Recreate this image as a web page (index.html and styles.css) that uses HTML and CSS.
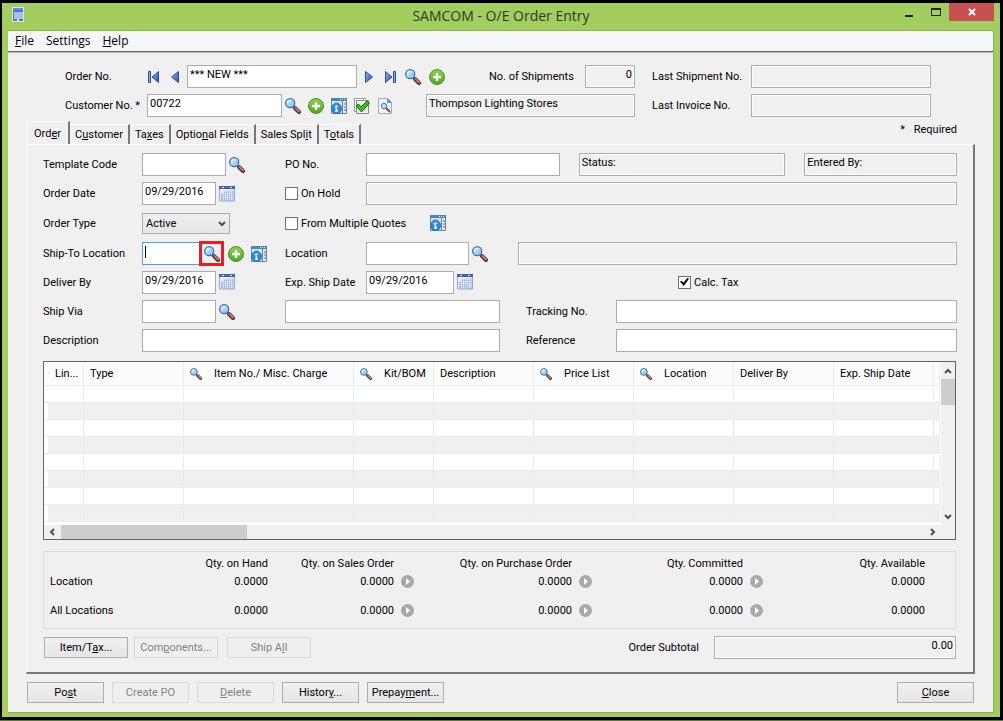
FILE: index.html
```html
<!DOCTYPE html>
<html lang="en">
<head>
<meta charset="utf-8">
<title>SAMCOM - O/E Order Entry</title>
<link rel="stylesheet" href="styles.css">
</head>
<body>

<!-- icon set -->
<svg class="sprite" aria-hidden="true">
  <linearGradient id="blue" x1="0" x2="1" y2="1"><stop offset="0" stop-color="#8fb4f0"/><stop offset="1" stop-color="#2450b0"/></linearGradient>
  <linearGradient id="lens" x1="0" x2="1" y2="1"><stop offset="0" stop-color="#d9f1ff"/><stop offset="1" stop-color="#7fb8ec"/></linearGradient>
  <linearGradient id="green" x2="0" y2="1"><stop offset="0" stop-color="#8fd04a"/><stop offset="1" stop-color="#4fa828"/></linearGradient>
  <linearGradient id="page" x1="0" x2="1" y2="1"><stop offset="0" stop-color="#ffffff"/><stop offset="1" stop-color="#b9cbf0"/></linearGradient>
  <symbol id="find" viewBox="0 0 16 16">
    <path d="M10 10l4 4" stroke="#5a2a2a" stroke-width="4" stroke-linecap="round"/>
    <path d="M10.500 10l3.500 3.500" stroke="#b98080" stroke-width="2" stroke-linecap="round"/>
    <path d="M8 8l2 2" stroke="#555c70" stroke-width="2"/>
    <circle cx="5.200" cy="5.200" r="4.500" fill="url(#lens)" stroke="#3f6ea8" stroke-width="1.300"/>
    <path d="M2.700 5.700a2.500 2.500 0 0 1 3-3" stroke="#fff" fill="none"/>
  </symbol>
  <symbol id="add" viewBox="0 0 16 16">
    <circle cx="8" cy="8" r="7.500" fill="url(#green)" stroke="#4a9424"/>
    <path d="M8 4v8M4 8h8" stroke="#fff" stroke-width="2.400"/>
  </symbol>
  <symbol id="info" viewBox="0 0 16 16">
    <path d="M.5.5h15v15H.5z" fill="#dfe6ee" stroke="#6d8494"/>
    <path d="M0 0h16v3H0z" fill="#4788b8"/><path d="M9 1.500h1M11 1.500h1M13 1.500h1" stroke="#fff"/>
    <path d="M3 5h5M2 7h3" stroke="#8a98a6"/><path d="M11.500 3v13" stroke="#6d8494"/>
    <path d="M13 6h2M13 9h2M13 12h2" stroke="#60707e"/>
    <circle cx="5.500" cy="10.500" r="5.200" fill="#2888dc" stroke="#1a68b4" stroke-width=".6"/>
    <path d="M2 9a4 3 0 0 1 7 0z" fill="#7cc0f5"/>
    <path d="M5.500 7v1.500M5.500 9.500V13M4.300 9.800h1M4 13h3" stroke="#fff" stroke-width="1.400"/>
  </symbol>
  <symbol id="approve" viewBox="0 0 16 16">
    <path d="M.5.5h11v13H.5z" fill="#fff" stroke="#9a9a9a"/>
    <path d="M2.500 2.500h12v13h-12z" fill="#f4f4f4" stroke="#888"/>
    <path d="M2 8l2.500-2L7 9l6-6 2.500 2L7.500 14z" fill="#35c21f" stroke="#0b6b08"/>
  </symbol>
  <symbol id="preview" viewBox="0 0 16 16">
    <path d="M1.500.5h9l4 4v11h-13z" fill="#eff3f8" stroke="#a4abb4"/>
    <path d="M10.500.5v4h4z" fill="#4aa0e0" stroke="#5f9fce"/>
    <circle cx="7" cy="8" r="2.700" fill="#b9def8" stroke="#447fbd"/>
    <path d="M9 10l4 4" stroke="#71505a" stroke-width="2"/>
  </symbol>
  <symbol id="calendar" viewBox="0 0 16 16">
    <path d="M.5 1h15v14H.5z" fill="url(#page)" stroke="#92a6d8"/>
    <path d="M0 0h16v3H0z" fill="#3f62b4"/><path d="M3 1.500h2M11 1.500h2" stroke="#fff"/>
    <path d="M4 5.500h10v6h-2v2H2v-6h2z" fill="#96abdd"/>
    <path d="M2 7.500h12M2 9.500h12M2 11.500h12M4.500 5v9M6.500 5v9M8.500 5v9M10.500 5v9M12.500 5v9" stroke="#e8eefc" stroke-width=".7"/>
  </symbol>
  <symbol id="next" viewBox="0 0 8 12"><path d="M.5.5v11l7-5.500z" fill="url(#blue)" stroke="#2c4c9c"/></symbol>
  <symbol id="prev" viewBox="0 0 8 12"><path d="M7.500.5v11L.5 6z" fill="url(#blue)" stroke="#2c4c9c"/></symbol>
  <symbol id="last" viewBox="0 0 12 12"><path d="M.5.5v11L7 6z" fill="url(#blue)" stroke="#2c4c9c"/><path d="M8.500.5h2v11h-2z" fill="#8fb0ec" stroke="#2c4c9c"/></symbol>
  <symbol id="first" viewBox="0 0 12 12"><path d="M11.500.5v11L5 6z" fill="url(#blue)" stroke="#2c4c9c"/><path d="M1.500.5h2v11h-2z" fill="#8fb0ec" stroke="#2c4c9c"/></symbol>
  <symbol id="go" viewBox="0 0 13 13"><circle cx="6.500" cy="6.500" r="6.500" fill="#a8a8a8"/><path d="M5 3v7l4-3.500z" fill="#fff"/></symbol>
  <symbol id="chevron" viewBox="0 0 8 6"><path d="M1 1l3 3 3-3" fill="none" stroke="#505050" stroke-width="2"/></symbol>
</svg>

<div class="window">
  <header class="titlebar">
    <svg class="app-icon" width="12" height="15" viewBox="0 0 12 15">
      <path d="M0 0h12v15H0z" fill="#d9e4f6"/><path d="M1 1h10v2H1z" fill="#6f8fd0"/>
      <path d="M1 3h10v2H1z" fill="#3c78e8"/><path d="M2 5h9v7H2z" fill="#a8c0ec"/>
      <path d="M1 12h4v2H1zM7 12h4v2H7z" fill="#68788c"/><path d="M1 5h1v9H1z" fill="#68788c"/>
    </svg>
    <h1>SAMCOM - O/E Order Entry</h1>
    <div class="window-buttons">
      <button type="button" aria-label="Minimize"><svg width="8" height="9"><path d="M0 8h8" stroke="#222" stroke-width="2"/></svg></button>
      <button type="button" aria-label="Maximize"><svg width="10" height="8"><path d="M.5 1v6.500h9V1" fill="none" stroke="#222"/><path d="M0 1h10" stroke="#222" stroke-width="2"/></svg></button>
      <button type="button" class="close" aria-label="Close window"><svg width="8" height="8"><path d="M1 1l6 6M7 1L1 7" stroke="#fff" stroke-width="2"/></svg></button>
    </div>
  </header>

  <main class="client">
    <nav class="menu">
      <a href="#"><u>F</u>ile</a>
      <a href="#">Settings</a>
      <a href="#"><u>H</u>elp</a>
    </nav>

    <form>
      <section class="order-head">
        <label for="order-no">Order No.</label>
        <div class="controls">
          <button type="button" class="icon nav-end" aria-label="First"><svg><use href="#first"/></svg></button>
          <button type="button" class="icon nav" aria-label="Previous"><svg><use href="#prev"/></svg></button>
          <input type="text" id="order-no" class="order-no" value="*** NEW ***">
          <button type="button" class="icon nav" aria-label="Next"><svg><use href="#next"/></svg></button>
          <button type="button" class="icon nav-end" aria-label="Last"><svg><use href="#last"/></svg></button>
          <button type="button" class="icon" aria-label="Find order"><svg><use href="#find"/></svg></button>
          <button type="button" class="icon" aria-label="New order"><svg><use href="#add"/></svg></button>
        </div>
        <div class="shipments">
          <label for="shipments">No. of Shipments</label>
          <input type="text" id="shipments" class="number" value="0" readonly>
        </div>
        <label for="last-shipment" class="last">Last Shipment No.</label>
        <input type="text" id="last-shipment" readonly>

        <label for="customer-no">Customer No. *</label>
        <div class="controls with-icons">
          <input type="text" id="customer-no" class="customer-no" value="00722">
          <button type="button" class="icon" aria-label="Find customer"><svg><use href="#find"/></svg></button>
          <button type="button" class="icon" aria-label="New customer"><svg><use href="#add"/></svg></button>
          <button type="button" class="icon" aria-label="Customer details"><svg><use href="#info"/></svg></button>
          <button type="button" class="icon" aria-label="Credit check"><svg><use href="#approve"/></svg></button>
          <button type="button" class="icon" aria-label="Customer inquiry"><svg><use href="#preview"/></svg></button>
        </div>
        <input type="text" value="Thompson Lighting Stores" aria-label="Customer name" readonly>
        <label for="last-invoice" class="last">Last Invoice No.</label>
        <input type="text" id="last-invoice" readonly>
      </section>

      <div class="tabs">
        <button type="button" class="active">Ord<u>e</u>r</button>
        <button type="button">C<u>u</u>stomer</button>
        <button type="button">Ta<u>x</u>es</button>
        <button type="button">Optio<u>n</u>al Fields</button>
        <button type="button">Sales Spl<u>i</u>t</button>
        <button type="button">T<u>o</u>tals</button>
        <p class="required"><span>*</span> Required</p>
      </div>

      <section class="panel">
        <div class="fields">
          <div class="row">
            <label for="template">Template Code</label>
            <div class="with-icons"><input type="text" id="template" class="w-code"><button type="button" class="icon" aria-label="Find template"><svg><use href="#find"/></svg></button></div>
            <label for="po">PO No.</label>
            <div class="rest po-row">
              <input type="text" id="po">
              <input type="text" value="Status:" aria-label="Status" readonly>
              <input type="text" value="Entered By:" aria-label="Entered by" readonly>
            </div>
          </div>

          <div class="row">
            <label for="order-date">Order Date</label>
            <div class="with-icons"><input type="text" id="order-date" class="w-date" value="09/29/2016"><button type="button" class="icon" aria-label="Pick order date"><svg><use href="#calendar"/></svg></button></div>
            <label class="check"><input type="checkbox"> On Hold</label>
            <input type="text" aria-label="Hold reason" readonly>
          </div>

          <div class="row tall">
            <label for="order-type">Order Type</label>
            <div class="select">
              <select id="order-type"><option>Active</option><option>Future</option><option>Standing</option><option>Quote</option></select>
              <svg width="8" height="6"><use href="#chevron"/></svg>
            </div>
            <div class="quotes">
              <label class="check"><input type="checkbox"> From Multiple Quotes</label>
              <button type="button" class="icon" aria-label="Quotes"><svg><use href="#info"/></svg></button>
            </div>
          </div>

          <div class="row">
            <label for="ship-to">Ship-To Location</label>
            <div class="with-icons ship-to">
              <input type="text" id="ship-to">
              <button type="button" class="icon highlight" aria-label="Find ship-to location"><svg><use href="#find"/></svg></button>
              <button type="button" class="icon" aria-label="New ship-to location"><svg><use href="#add"/></svg></button>
              <button type="button" class="icon" aria-label="Ship-to details"><svg><use href="#info"/></svg></button>
            </div>
            <label for="location">Location</label>
            <div class="rest">
              <div class="with-icons location"><input type="text" id="location"><button type="button" class="icon" aria-label="Find location"><svg><use href="#find"/></svg></button></div>
              <input type="text" class="grow" aria-label="Location name" readonly>
            </div>
          </div>

          <div class="row tall">
            <label for="deliver-by">Deliver By</label>
            <div class="with-icons"><input type="text" id="deliver-by" class="w-date" value="09/29/2016"><button type="button" class="icon" aria-label="Pick delivery date"><svg><use href="#calendar"/></svg></button></div>
            <label for="exp-ship">Exp. Ship Date</label>
            <div class="rest">
              <div class="with-icons exp-ship"><input type="text" id="exp-ship" value="09/29/2016"><button type="button" class="icon" aria-label="Pick ship date"><svg><use href="#calendar"/></svg></button></div>
              <label class="check"><input type="checkbox" checked> Calc. Tax</label>
            </div>
          </div>

          <div class="row wide">
            <label for="ship-via">Ship Via</label>
            <div class="with-icons"><input type="text" id="ship-via" class="w-date"><button type="button" class="icon" aria-label="Find ship via"><svg><use href="#find"/></svg></button></div>
            <input type="text" aria-label="Ship via name">
            <label for="tracking" class="inset">Tracking No.</label>
            <input type="text" id="tracking">
          </div>

          <div class="row wide">
            <label for="description">Description</label>
            <input type="text" id="description" class="span2">
            <label for="reference" class="inset">Reference</label>
            <input type="text" id="reference">
          </div>
        </div>

        <div class="grid">
          <div class="grid-view">
            <table>
              <colgroup><col class="c40"><col class="c100"><col class="c170"><col class="c80"><col class="c100"><col class="c100"><col class="c100"><col class="c100"><col class="c100"><col></colgroup>
              <thead>
                <tr>
                  <th class="line">Lin...</th>
                  <th>Type</th>
                  <th><svg><use href="#find"/></svg>Item No./ Misc. Charge</th>
                  <th><svg><use href="#find"/></svg>Kit/BOM</th>
                  <th>Description</th>
                  <th><svg><use href="#find"/></svg>Price List</th>
                  <th><svg><use href="#find"/></svg>Location</th>
                  <th>Deliver By</th>
                  <th>Exp. Ship Date</th>
                  <th></th>
                </tr>
              </thead>
              <tbody>
                <tr><td></td><td></td><td></td><td></td><td></td><td></td><td></td><td></td><td></td><td></td></tr>
                <tr><td></td><td></td><td></td><td></td><td></td><td></td><td></td><td></td><td></td><td></td></tr>
                <tr><td></td><td></td><td></td><td></td><td></td><td></td><td></td><td></td><td></td><td></td></tr>
                <tr><td></td><td></td><td></td><td></td><td></td><td></td><td></td><td></td><td></td><td></td></tr>
                <tr><td></td><td></td><td></td><td></td><td></td><td></td><td></td><td></td><td></td><td></td></tr>
                <tr><td></td><td></td><td></td><td></td><td></td><td></td><td></td><td></td><td></td><td></td></tr>
                <tr><td></td><td></td><td></td><td></td><td></td><td></td><td></td><td></td><td></td><td></td></tr>
                <tr><td></td><td></td><td></td><td></td><td></td><td></td><td></td><td></td><td></td><td></td></tr>
              </tbody>
            </table>
          </div>
          <div class="scroll-y">
            <svg class="up" width="8" height="6"><use href="#chevron"/></svg>
            <div class="thumb"></div>
            <svg width="8" height="6"><use href="#chevron"/></svg>
          </div>
          <div class="scroll-x">
            <svg class="left" width="8" height="6"><use href="#chevron"/></svg>
            <div class="thumb"></div>
            <svg class="right" width="8" height="6"><use href="#chevron"/></svg>
          </div>
        </div>

        <table class="totals">
          <colgroup><col class="t-name"><col class="t-hand"><col class="t-sales"><col class="t-go"><col class="t-purchase"><col class="t-go"><col class="t-committed"><col class="t-go"><col class="t-available"><col></colgroup>
          <tr>
            <td></td><th>Qty. on Hand</th><th>Qty. on Sales Order</th><td></td><th>Qty. on Purchase Order</th><td></td><th>Qty. Committed</th><td></td><th>Qty. Available</th><td></td>
          </tr>
          <tr>
            <th class="name">Location</th>
            <td>0.0000</td>
            <td>0.0000</td><td><button type="button" class="icon go" aria-label="Sales orders"><svg><use href="#go"/></svg></button></td>
            <td>0.0000</td><td><button type="button" class="icon go" aria-label="Purchase orders"><svg><use href="#go"/></svg></button></td>
            <td>0.0000</td><td><button type="button" class="icon go" aria-label="Committed"><svg><use href="#go"/></svg></button></td>
            <td>0.0000</td><td></td>
          </tr>
          <tr class="all">
            <th class="name">All Locations</th>
            <td>0.0000</td>
            <td>0.0000</td><td><button type="button" class="icon go" aria-label="All sales orders"><svg><use href="#go"/></svg></button></td>
            <td>0.0000</td><td><button type="button" class="icon go" aria-label="All purchase orders"><svg><use href="#go"/></svg></button></td>
            <td>0.0000</td><td><button type="button" class="icon go" aria-label="All committed"><svg><use href="#go"/></svg></button></td>
            <td>0.0000</td><td></td>
          </tr>
        </table>

        <div class="panel-footer">
          <button type="button" class="btn">Item/T<u>a</u>x...</button>
          <button type="button" class="btn" disabled>Com<u>p</u>onents...</button>
          <button type="button" class="btn ship-all" disabled>Ship A<u>l</u>l</button>
          <label for="subtotal">Order Subtotal</label>
          <input type="text" id="subtotal" class="number" value="0.00" readonly>
        </div>
      </section>

      <footer class="actions">
        <button type="button" class="btn">Po<u>s</u>t</button>
        <button type="button" class="btn" disabled>Create PO</button>
        <button type="button" class="btn" disabled><u>D</u>elete</button>
        <button type="button" class="btn">Histor<u>y</u>...</button>
        <button type="button" class="btn">Prepay<u>m</u>ent...</button>
        <button type="button" class="btn close-btn"><u>C</u>lose</button>
      </footer>
    </form>
  </main>
</div>

</body>
</html>
```

FILE: styles.css
```css
* {
  box-sizing: border-box;
}

body {
  margin: 0;
  min-height: 100vh;
  display: flex;
  flex-direction: column;
  padding: 3px 3px 3px 2px;
  background-color: #000;
  border-bottom: 1px solid #5c7a30;
  font: 11px/13px Roboto, "Liberation Sans", sans-serif;
  color: #000;
}

.sprite {
  position: absolute;
  width: 0;
  height: 0;
}

input,
select,
button {
  font: inherit;
  color: inherit;
  margin: 0;
  border-radius: 0;
}

u {
  text-underline-offset: 1px;
}

/* window frame */
.window {
  flex: 1;
  display: flex;
  flex-direction: column;
  background-color: #a2cd5f;
  padding: 0 6px 4px 6px;
}

.titlebar {
  display: grid;
  grid-template-columns: 1fr auto 1fr;
  height: 27px;
}

.app-icon {
  margin: 4px 0 0 4px;
}

h1 {
  margin: 0;
  font: 14px/26px "Open Sans", "Noto Sans", sans-serif;
  color: #2f3a1c;
}

.window-buttons {
  display: flex;
  justify-content: flex-end;
  align-items: flex-start;
}

.window-buttons button {
  display: flex;
  justify-content: center;
  align-items: center;
  width: 27px;
  height: 18px;
  padding: 0;
  border: none;
  background: none;
}

.window-buttons .close {
  width: 45px;
  background-color: #c75050;
}

.client {
  flex: 1;
  background-color: #f0f0f0;
  border: 1px solid #8cb24f;
  border-left: none;
}

.menu {
  display: flex;
  gap: 12px;
  height: 21px;
  margin-bottom: 1px;
  padding: 0 7px;
  background-color: #f5f6f8;
  border-bottom: 1px solid #6a6a6a;
  box-shadow: 0 1px #b4b4b4;
  font: 12px/20px "Open Sans", "Noto Sans", sans-serif;
}

.menu a {
  color: #000;
  text-decoration: none;
}

/* text boxes */
input[type="text"] {
  width: 100%;
  min-width: 0;
  height: 23px;
  padding: 0 2px 4px;
  border: 1px solid #abadb3;
  background-color: #fff;
}

input[type="text"][readonly] {
  background-color: #f0f0f0;
  box-shadow: inset 0 0 0 1px #fff;
}

input.number {
  text-align: right;
}

.icon {
  flex: none;
  width: 16px;
  height: 16px;
  padding: 0;
  border: none;
  background: none;
}

.icon svg {
  display: block;
  width: 100%;
  height: 100%;
}

.with-icons {
  display: flex;
  align-items: center;
  gap: 7px;
}

.with-icons input[type="text"] {
  flex: none;
  margin-right: -4px;
}

/* order and customer number */
.order-head {
  display: grid;
  grid-template-columns: 82px 279px 209px 116px 1fr;
  row-gap: 6px;
  align-items: center;
  padding: 12px 62px 4px 57px;
}

.controls {
  display: flex;
  align-items: center;
}

.controls:not(.with-icons) {
  gap: 8px;
}

.nav {
  width: 8px;
  height: 12px;
}

.nav-end {
  width: 12px;
  height: 12px;
}

input[type="text"].order-no {
  flex: none;
  width: 170px;
}

.controls .nav-end:first-child {
  margin-right: 4px;
}

.controls .order-no + .nav {
  margin-right: 4px;
}

input[type="text"].customer-no {
  width: 135px;
}

.shipments {
  display: flex;
  justify-content: space-between;
  align-items: center;
  padding-left: 63px;
}

.shipments input[type="text"] {
  width: 50px;
}

.last {
  padding-left: 17px;
}

/* tabs */
.tabs {
  display: flex;
  align-items: flex-end;
  height: 23px;
  padding: 0 36px 0 18px;
}

.tabs button {
  height: 20px;
  padding: 0 5px;
  border: none;
  border-top: 1px solid #fff;
  border-right: 2px solid #777;
  background-color: #f0f0f0;
}

.tabs .active {
  height: 23px;
  padding: 0 7px;
  border-left: 1px solid #fff;
}

.required {
  margin: 2px 0 0 auto;
  align-self: flex-start;
}

.required span {
  margin-right: 6px;
}

.panel {
  margin: 0 18px;
  padding: 8px 16px 13px;
  border: 1px solid #fff;
  border-right: 2px solid #777;
  border-bottom: 2px solid #777;
}

.fields {
  display: grid;
  row-gap: 6px;
}

.row {
  display: grid;
  grid-template-columns: 99px 143px 81px 1fr;
  align-items: center;
  height: 23px;
}

.row.tall {
  height: 24px;
}

.row.wide {
  grid-template-columns: 99px 143px 215px 116px 1fr;
}

.inset {
  padding-left: 26px;
}

.span2 {
  grid-column: span 2;
}

.row input.w-code {
  width: 84px;
}

.row input.w-date {
  width: 74px;
}

.rest {
  display: flex;
  align-items: center;
}

.po-row {
  display: grid;
  grid-template-columns: 194fr 207fr 153fr;
  gap: 19px;
}

.check {
  display: flex;
  align-items: center;
  gap: 3px;
  white-space: nowrap;
}

.check input {
  appearance: none;
  display: grid;
  place-items: center;
  width: 13px;
  height: 13px;
  border: 1px solid #707070;
  background-color: #fff;
}

.check input:checked::after {
  content: "";
  width: 9px;
  height: 9px;
  background-color: #000;
  clip-path: polygon(0 45%, 20% 35%, 38% 58%, 82% 5%, 100% 15%, 42% 95%);
}

.select {
  position: relative;
  width: 88px;
}

.select select {
  appearance: none;
  display: block;
  width: 100%;
  height: 21px;
  padding: 0 3px;
  border: 1px solid #acacac;
  background: linear-gradient(#f0f0f0, #e5e5e5);
}

.select svg {
  position: absolute;
  right: 4px;
  top: 8px;
  pointer-events: none;
}

.quotes {
  grid-column: span 2;
  display: flex;
  align-items: center;
  gap: 24px;
}

/* focused box, with the caret at its left edge */
.row .ship-to input {
  width: 58px;
  margin-right: -8px;
  border-color: #569de5;
  border-right: none;
  background: linear-gradient(#000, #000) 2px 3px / 1px 12px no-repeat #fff;
}

.highlight {
  width: 25px;
  height: 25px;
  margin-right: -3px;
  border: 3px solid #ed1c24;
}

.highlight svg {
  width: 16px;
  height: 16px;
  margin-left: 2px;
}

.location {
  width: 152px;
}

.row .location input {
  width: 103px;
}

.exp-ship {
  width: 312px;
}

.row .exp-ship input {
  width: 88px;
}

.grow {
  flex: 1;
}

/* detail grid */
.grid {
  display: grid;
  grid-template-columns: 1fr 14px;
  margin-top: 9px;
  margin-right: 1px;
  border: 1px solid #646464;
  background-color: #f0f0f0;
}

.grid-view {
  overflow: hidden;
  height: 163px;
  background-color: #fff;
  border-right: 1px solid #fff;
}

.grid table {
  width: 100%;
  table-layout: fixed;
  border-collapse: separate;
  border-spacing: 0;
}

.c40 { width: 40px; }
.c80 { width: 80px; }
.c100 { width: 100px; }
.c170 { width: 170px; }

.grid th {
  height: 24px;
  padding: 0 6px;
  border-right: 1px solid #e5eff9;
  border-bottom: 1px solid #e5eff9;
  background-color: #fcfcfd;
  font-weight: normal;
  text-align: left;
  white-space: nowrap;
}

.grid th.line {
  padding-left: 11px;
}

.grid th svg {
  width: 12px;
  height: 12px;
  margin-right: 12px;
  vertical-align: middle;
}

.grid td {
  height: 17px;
  padding: 0;
  border-right: 1px solid #ececec;
  border-bottom: 1px solid #ececec;
}

.grid tr:nth-child(even) td {
  background-color: #f0f0f0;
}

.grid tr:nth-child(even) td:first-child {
  box-shadow: inset 4px 0 #fff;
}

.scroll-y {
  display: flex;
  flex-direction: column;
  align-items: center;
  justify-content: space-between;
  padding: 6px 0 5px;
}

.scroll-y .thumb {
  width: 14px;
  height: 26px;
  margin: 5px 0 auto;
  background-color: #cdcdcd;
}

.scroll-x {
  display: flex;
  align-items: center;
  justify-content: space-between;
  height: 14px;
  padding: 0 4px;
}

.scroll-x .thumb {
  width: 186px;
  height: 14px;
  margin: 0 auto 0 5px;
  background-color: #cdcdcd;
}

.up {
  transform: rotate(180deg);
}

.left {
  transform: rotate(90deg);
}

.right {
  transform: rotate(-90deg);
}

/* quantities */
.totals {
  width: calc(100% - 1px);
  margin-top: 11px;
  padding: 2px 0;
  table-layout: fixed;
  border: 1px solid #dcdcdc;
  border-spacing: 0;
}

.totals th,
.totals td {
  height: 18px;
  padding: 0;
  font-weight: normal;
  text-align: right;
  white-space: nowrap;
}

.totals .name {
  padding-left: 6px;
  text-align: left;
}

.totals .all th,
.totals .all td {
  height: 36px;
  padding-top: 4px;
}

.t-name { width: 136px; }
.t-hand { width: 88px; }
.t-sales { width: 126px; }
.t-go { width: 24px; }
.t-purchase { width: 154px; }
.t-committed { width: 147px; }
.t-available { width: 158px; }

.go {
  display: block;
  width: 13px;
  height: 13px;
  margin-left: 7px;
}

.btn {
  width: 77px;
  height: 21px;
  padding: 0;
  border: 1px solid #acacac;
  background: linear-gradient(#f0f0f0, #e5e5e5);
}

.btn:disabled {
  border-color: #d9d9d9;
  background: #efefef;
  color: #838383;
}

.panel-footer {
  display: flex;
  align-items: center;
  gap: 6px;
  margin-top: 7px;
  padding: 0 1px;
}

.panel-footer .btn {
  width: 84px;
}

.panel-footer .ship-all {
  margin-left: 3px;
}

.panel-footer label {
  margin-left: auto;
  margin-right: 9px;
}

.panel-footer input[type="text"] {
  width: 242px;
}

.actions {
  display: flex;
  gap: 8px;
  padding: 8px 19px 9px;
}

.close-btn {
  margin-left: auto;
}
```
